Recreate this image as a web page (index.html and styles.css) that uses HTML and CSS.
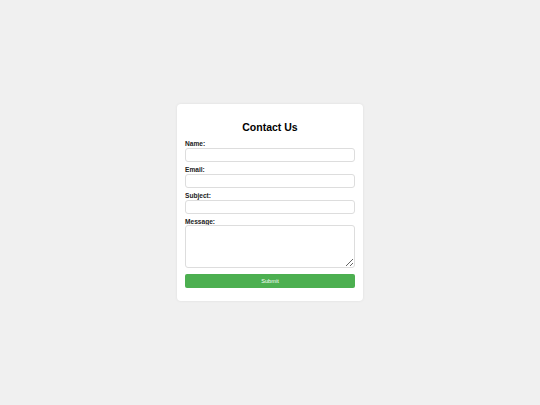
FILE: index.html
```html
<!DOCTYPE html>
<html lang="en">
<head>
<meta charset="utf-8">
<title>Contact Us</title>
<link rel="stylesheet" href="styles.css">
</head>
<body>
<div class="card">
  <h2 class="title">Contact Us</h2>
  <form class="form">
    <label class="label" for="name">Name:</label>
    <input class="field" type="text" id="name">
    <label class="label" for="email">Email:</label>
    <input class="field" type="email" id="email">
    <label class="label" for="subject">Subject:</label>
    <input class="field" type="text" id="subject">
    <label class="label label-msg" for="message">Message:</label>
    <textarea class="field area" id="message"></textarea>
    <button class="submit" type="button">Submit</button>
  </form>
</div>
</body>
</html>
```

FILE: styles.css
```css
* { box-sizing: border-box; }
html, body { margin: 0; padding: 0; }
body {
  background: #f0f0f0;
  font-family: "Liberation Sans", Arial, sans-serif;
  height: 100vh;
  display: flex;
  align-items: center;
  justify-content: center;
}
.card {
  width: 186px;
  background: #fff;
  border-radius: 4px;
  padding: 8px 8px 13px;
  box-shadow: 0 0 3px rgba(0,0,0,0.08);
}
.title {
  margin: 8.5px 0 7.5px;
  font-size: 10.5px;
  line-height: 12px;
  font-weight: bold;
  text-align: center;
  color: #000;
}
.form { display: flex; flex-direction: column; }
.label {
  display: block;
  font-size: 6.6px;
  line-height: 7px;
  font-weight: bold;
  color: #222;
  margin-bottom: 1px;
}
.label-msg { margin-bottom: 0; }
.field {
  display: block;
  width: 100%;
  height: 14px;
  margin: 0 0 4px;
  padding: 2px 3px;
  border: 1px solid #ddd;
  border-radius: 3px;
  background: #fff;
  font-size: 6px;
  font-family: inherit;
}
.area {
  height: 43px;
  margin-bottom: 0;
  resize: vertical;
}
.submit {
  margin-top: 6px;
  height: 14px;
  width: 100%;
  border: none;
  border-radius: 2px;
  background: #4caf50;
  color: #fff;
  font-family: inherit;
  font-size: 5.6px;
  padding: 0;
}
```
